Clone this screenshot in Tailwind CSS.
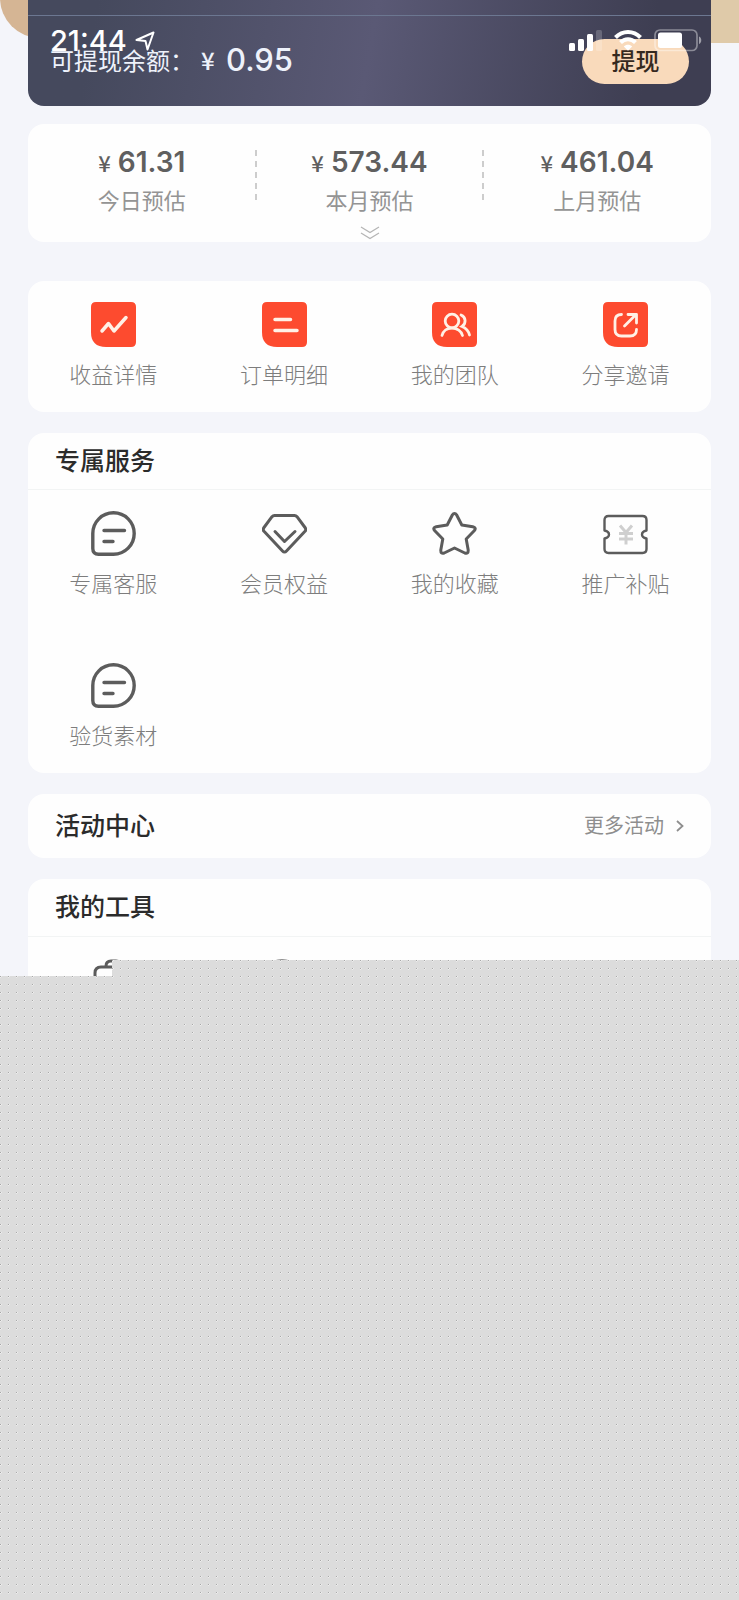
<!DOCTYPE html>
<html lang="zh-CN">
<head>
    <meta charset="UTF-8">
    <meta name="viewport" content="width=device-width, initial-scale=1.0">
    <title>我的</title>
    <script src="https://cdn.jsdelivr.net/npm/@tailwindcss/browser@4"></script>
    <style>
        body {
            font-family: 'Inter', 'Noto Sans CJK SC', sans-serif;
        }
    </style>
</head>
<body class="bg-[#f4f5fa] antialiased">
    <div class="relative min-h-screen flex flex-col overflow-hidden">
        <!-- Gold backdrop behind the balance card -->
        <div class="absolute top-0 right-0 w-20 h-[43px] bg-[#dfcaa9]"></div>
        <div class="absolute -top-[42px] left-0 w-20 h-20 rounded-full bg-[#d5b594]"></div>

        <!-- Status bar -->
        <div class="absolute z-10 top-0 inset-x-0 pl-[50px] pr-[37px] pt-[29px] flex justify-between items-start text-white">
            <div class="flex items-center gap-2">
                <span class="text-[29px] leading-6 font-medium">21:44</span>
                <svg class="w-5 h-5" viewBox="0 0 20 20" fill="none" stroke="currentColor" stroke-width="2" stroke-linejoin="round"><path d="M1.500 9 18.500 1.500 12.500 18.500 10.500 10z"/></svg>
            </div>
            <div class="flex gap-3">
                <svg class="w-[34px] h-[23px]" viewBox="0 0 34 23" fill="currentColor">
                    <rect x="1" y="14" width="6" height="8" rx="1.500"/>
                    <rect x="10" y="10" width="6" height="12" rx="1.500"/>
                    <rect x="19" y="5" width="6" height="17" rx="1.500"/>
                    <rect x="28" y="1" width="6" height="21" rx="1.500" opacity=".2"/>
                </svg>
                <svg class="w-7 h-[23px]" viewBox="0 0 28 23" fill="none" stroke="currentColor" stroke-width="4">
                    <path d="M1.500 8.500C8.500 1.200 19.500 1.200 26.500 8.500M6.500 13.500c4.300-4.300 10.700-4.300 15 0"/>
                    <path d="m9.800 17.500 4.200 4.300 4.200-4.300c-2.400-2.200-6-2.200-8.400 0z" fill="currentColor" stroke="none"/>
                </svg>
                <svg class="w-12 h-[23px]" viewBox="0 0 48 23">
                    <rect x="1" y="1" width="42" height="20.500" rx="5" fill="none" stroke="#fff" stroke-opacity=".4" stroke-width="1.700"/>
                    <rect x="4" y="3.500" width="24" height="15.500" rx="2.500" fill="#fff"/>
                    <path d="M45 7.500c3 1 3 6.500 0 7.500z" fill="#fff" fill-opacity=".5"/>
                </svg>
            </div>
        </div>

        <div class="relative px-[28px]">
            <!-- Balance -->
            <header class="rounded-b-2xl bg-linear-100 from-[#45495d] from-10% via-[#5a5975] via-50% to-[#3e3e52] to-90% text-white">
                <div class="h-4 border-b border-[#6c7791]"></div>
                <div class="px-[22px] pt-[23px] pb-[22px] flex items-center justify-between">
                    <p class="flex items-center text-[24px] leading-[45px] text-[#eef2fb]">
                        <span>可提现余额：</span>
                        <span class="ml-[7px] mr-px w-[24px] font-medium font-['Noto_Sans_CJK_SC'] leading-[42px] self-start">¥</span>
                        <span class="text-[31px] font-medium leading-[42px] self-start">0.95</span>
                    </p>
                    <button type="button" class="w-[107px] h-[45px] rounded-full bg-[#f9dabb] text-[#35291f] text-[24px] font-medium">提现</button>
                </div>
            </header>

            <!-- Estimates -->
            <section class="mt-[18px] rounded-2xl bg-[#fefefe] pt-[22px]">
                <div class="grid grid-cols-3 text-center">
                    <div>
                        <p class="text-[28px] leading-[32px] font-semibold text-[#5f5f5f]"><span class="text-[22px] font-medium font-['Noto_Sans_CJK_SC']">¥</span> 61.31</p>
                        <p class="mt-[7px] text-[22px] leading-[32px] text-[#949494]">今日预估</p>
                    </div>
                    <div class="relative">
                        <div class="absolute -left-px top-1 h-[50px] w-[2px] bg-[repeating-linear-gradient(to_bottom,#cdcdcd_0_6px,transparent_6px_11px)]"></div>
                        <p class="text-[28px] leading-[32px] font-semibold text-[#5f5f5f]"><span class="text-[22px] font-medium font-['Noto_Sans_CJK_SC']">¥</span> 573.44</p>
                        <p class="mt-[7px] text-[22px] leading-[32px] text-[#949494]">本月预估</p>
                    </div>
                    <div class="relative">
                        <div class="absolute -left-px top-1 h-[50px] w-[2px] bg-[repeating-linear-gradient(to_bottom,#cdcdcd_0_6px,transparent_6px_11px)]"></div>
                        <p class="text-[28px] leading-[32px] font-semibold text-[#5f5f5f]"><span class="text-[22px] font-medium font-['Noto_Sans_CJK_SC']">¥</span> 461.04</p>
                        <p class="mt-[7px] text-[22px] leading-[32px] text-[#949494]">上月预估</p>
                    </div>
                </div>
                <button type="button" aria-label="展开" class="mx-auto flex h-[25px] items-center justify-center pt-[6px]">
                    <svg class="w-5 h-[14px]" viewBox="0 0 20 14" fill="none" stroke="#b5b5b5" stroke-width="1.300"><path d="m1 1 9 5.500L19 1M1 7l9 5.500L19 7"/></svg>
                </button>
            </section>

            <!-- Shortcuts -->
            <nav class="mt-[39px] rounded-2xl bg-[#fefefe] grid grid-cols-4 py-[21px] text-[22px] leading-[32px] font-light text-[#7d7d7d]">
                <a href="#" class="flex flex-col items-center gap-3">
                    <svg class="w-[45px] h-[45px]" viewBox="0 0 45 45"><path d="M5 0h35q5 0 5 5v35q0 5-5 5H15Q0 45 0 30V5q0-5 5-5z" fill="#fd4b2f"/><path d="m11 29 6.500-7.500 5.500 7.500L35 15.500" fill="none" stroke="#fff1e6" stroke-width="3.500" stroke-linecap="round" stroke-linejoin="round"/></svg>
                    <span>收益详情</span>
                </a>
                <a href="#" class="flex flex-col items-center gap-3">
                    <svg class="w-[45px] h-[45px]" viewBox="0 0 45 45"><path d="M5 0h35q5 0 5 5v35q0 5-5 5H15Q0 45 0 30V5q0-5 5-5z" fill="#fd4b2f"/><path d="M13 17.500h15.500M13 28.500h22" fill="none" stroke="#fff1e6" stroke-width="3.500" stroke-linecap="round"/></svg>
                    <span>订单明细</span>
                </a>
                <a href="#" class="flex flex-col items-center gap-3">
                    <svg class="w-[45px] h-[45px]" viewBox="0 0 45 45"><path d="M5 0h35q5 0 5 5v35q0 5-5 5H15Q0 45 0 30V5q0-5 5-5z" fill="#fd4b2f"/><g fill="none" stroke="#fff1e6" stroke-width="2.800" stroke-linecap="round"><circle cx="20" cy="19" r="6.800"/><path d="M10 33.500c1-4.500 5-7.500 10-7.500s9.500 3 10.500 7.500M29 13c5 2 5.500 8.500 1 11.500 3.800 1.500 6.500 4.500 7.500 8.500"/></g></svg>
                    <span>我的团队</span>
                </a>
                <a href="#" class="flex flex-col items-center gap-3">
                    <svg class="w-[45px] h-[45px]" viewBox="0 0 45 45"><path d="M5 0h35q5 0 5 5v35q0 5-5 5H15Q0 45 0 30V5q0-5 5-5z" fill="#fd4b2f"/><path d="M18.500 12.500q-6.500 0-6.500 6.500v8.500q0 6.500 6.500 6.500H27q6.500 0 6.500-6.500M21.500 24 32.500 13M25 12.500h8.500V21" fill="none" stroke="#fff1e6" stroke-width="2.800" stroke-linecap="round" stroke-linejoin="round"/></svg>
                    <span>分享邀请</span>
                </a>
            </nav>

            <!-- Services -->
            <section class="mt-[21px] rounded-2xl bg-[#fefefe]">
                <h2 class="px-[27px] text-[25px] leading-[56px] font-medium text-[#2b2b2b] border-b border-[#f2f4f4]">专属服务</h2>
                <div class="grid grid-cols-4 gap-y-[63px] py-[21px] text-[22px] leading-[32px] font-light text-[#7d7d7d]">
                    <a href="#" class="flex flex-col items-center gap-3">
                        <svg class="w-[45px] h-[45px]" viewBox="0 0 45 45" fill="none" stroke="#5c5c5c" stroke-width="3.400" stroke-linecap="round"><path d="M22.500 1.800C34 1.800 43.200 11 43.200 22.500S34 43.200 22.500 43.200H7.500q-5.700 0-5.700-5.700v-15C1.800 11 11 1.800 22.500 1.800z"/><path d="M13 19.500h20.500M13 30.500h9"/></svg>
                        <span>专属客服</span>
                    </a>
                    <a href="#" class="flex flex-col items-center gap-3">
                        <svg class="w-[45px] h-[45px]" viewBox="0 0 45 45" fill="none" stroke="#5c5c5c" stroke-width="3" stroke-linecap="round" stroke-linejoin="round"><path d="M12.500 4.500h20q1.500 0 2.500 1.200l8 10.800q1.500 2 0 3.800L24.500 40q-2 2.200-4 0L2 20.300q-1.500-1.800 0-3.800l8-10.800q1-1.200 2.500-1.200z"/><path d="m13 20.500 9.500 10 10.500-10"/></svg>
                        <span>会员权益</span>
                    </a>
                    <a href="#" class="flex flex-col items-center gap-3">
                        <svg class="w-[45px] h-[45px]" viewBox="0 0 45 45" fill="none" stroke="#5c5c5c" stroke-width="3" stroke-linejoin="round"><path d="M20.200 4.200q2.300-3.400 4.600 0l5 9.800 11 1.800q4 1 1.400 4l-8 8.200 2 11q.2 4.300-3.400 3l-10.300-5-10.300 5q-3.600 1.300-3.400-3l2-11-8-8.200q-2.600-3 1.400-4l11-1.800z"/></svg>
                        <span>我的收藏</span>
                    </a>
                    <a href="#" class="flex flex-col items-center gap-3">
                        <svg class="w-[45px] h-[45px]" viewBox="0 0 45 45" fill="none" stroke="#5c5c5c" stroke-width="2.400" stroke-linejoin="round"><path d="M5.500 5h34q4 0 4 4v10.500q-4.500 1-4.500 4t4.500 4V38q0 4-4 4h-34q-4 0-4-4V27.500q4.500-1 4.500-4t-4.500-4V9q0-4 4-4z"/><path d="m17 14.500 6 7 6-7M23 21.500v12M16 22.500h14M16 28h14" stroke="#cfcfcf" stroke-width="3"/></svg>
                        <span>推广补贴</span>
                    </a>
                    <a href="#" class="flex flex-col items-center gap-3">
                        <svg class="w-[45px] h-[45px]" viewBox="0 0 45 45" fill="none" stroke="#5c5c5c" stroke-width="3.400" stroke-linecap="round"><path d="M22.500 1.800C34 1.800 43.200 11 43.200 22.500S34 43.200 22.500 43.200H7.500q-5.700 0-5.700-5.700v-15C1.800 11 11 1.800 22.500 1.800z"/><path d="M13 19.500h20.500M13 30.500h9"/></svg>
                        <span>验货素材</span>
                    </a>
                </div>
            </section>

            <!-- Activities -->
            <section class="mt-[21px] rounded-2xl bg-[#fefefe] px-[27px] flex items-center justify-between">
                <h2 class="text-[25px] leading-[64px] font-medium text-[#2b2b2b]">活动中心</h2>
                <a href="#" class="flex items-center gap-3 text-[20px] text-[#8e8e8e]">
                    更多活动
                    <svg class="w-2 h-3" viewBox="0 0 8 12" fill="none" stroke="currentColor" stroke-width="1.800"><path d="m1 1 5.500 5L1 11"/></svg>
                </a>
            </section>

            <!-- Tools -->
            <section class="mt-[21px] rounded-t-2xl bg-[#fefefe]">
                <h2 class="px-[27px] text-[25px] leading-[57px] font-medium text-[#2b2b2b] border-b border-[#f2f4f4]">我的工具</h2>
                <div class="grid grid-cols-4 justify-items-center pt-[21px] h-[39px] overflow-hidden">
                    <svg class="w-[45px] h-[45px]" viewBox="0 0 45 45" fill="none" stroke="#5c5c5c" stroke-width="3"><path d="M4 40V15q0-6 6-6h25q6 0 6 6v25zM15 9V8q0-5 5-5h5q5 0 5 5v1"/></svg>
                    <svg class="w-[45px] h-[45px]" viewBox="0 0 45 45" fill="none" stroke="#8e8e8e" stroke-width="2"><circle cx="20" cy="22" r="20"/></svg>
                </div>
            </section>
        </div>

        <!-- Part of the page that has not loaded -->
        <div class="relative grow bg-[#dcdcdc]">
            <div class="absolute bottom-full left-[112px] right-0 h-4 bg-[#dcdcdc]">
                <svg class="w-full h-full" aria-hidden="true"><rect width="100%" height="100%" fill="url(#dots)"/></svg>
            </div>
            <svg class="absolute inset-0 w-full h-full" aria-hidden="true">
                <defs>
                    <pattern id="dots" width="8" height="8" patternUnits="userSpaceOnUse">
                        <path d="M0 0h1v1H0z" fill="#a8a8a8"/>
                        <path d="M1 0h1v1H1zM0 1h1v1H0z" fill="#ededed"/>
                    </pattern>
                </defs>
                <rect width="100%" height="100%" fill="url(#dots)"/>
            </svg>
        </div>
    </div>
</body>
</html>
